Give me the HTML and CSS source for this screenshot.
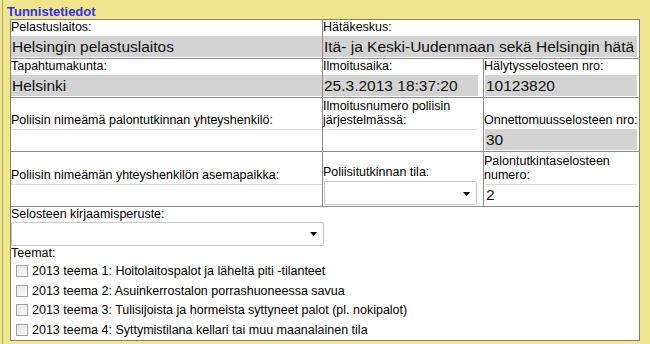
FILE: index.html
```html
<!DOCTYPE html>
<html lang="fi">
<head>
    <meta charset="UTF-8">
    <meta name="viewport" content="width=device-width, initial-scale=1.0">
    <title>Tunnistetiedot</title>
    <link rel="stylesheet" href="styles.css">
</head>
<body>

<div class="panel">
    <div class="panel-title">Tunnistetiedot</div>

    <div class="form-grid">
        <!-- Row 1 -->
        <div class="cell">
            <div class="label">Pelastuslaitos:</div>
            <div class="value">Helsingin pelastuslaitos</div>
        </div>
        <div class="cell wide">
            <div class="label">Hätäkeskus:</div>
            <div class="value w-wide">Itä- ja Keski-Uudenmaan sekä Helsingin hätä</div>
        </div>

        <!-- Row 2 -->
        <div class="cell">
            <div class="label">Tapahtumakunta:</div>
            <div class="value">Helsinki</div>
        </div>
        <div class="cell">
            <div class="label">Ilmoitusaika:</div>
            <div class="value w-mid">25.3.2013 18:37:20</div>
        </div>
        <div class="cell">
            <div class="label">Hälytysselosteen nro:</div>
            <div class="value w-right">10123820</div>
        </div>

        <!-- Row 3 -->
        <div class="cell">
            <div class="label">Poliisin nimeämä palontutkinnan yhteyshenkilö:</div>
            <div class="value blank"></div>
        </div>
        <div class="cell">
            <div class="label">Ilmoitusnumero poliisin<br>järjestelmässä:</div>
            <div class="value blank w-mid-blank"></div>
        </div>
        <div class="cell">
            <div class="label">Onnettomuusselosteen nro:</div>
            <div class="value w-right">30</div>
        </div>

        <!-- Row 4 -->
        <div class="cell">
            <div class="label">Poliisin nimeämän yhteyshenkilön asemapaikka:</div>
            <div class="value blank"></div>
        </div>
        <div class="cell">
            <div class="label">Poliisitutkinnan tila:</div>
            <div class="select select-mid">
                <svg width="7" height="4" viewBox="0 0 7 4"><path d="M0 0H7L3.5 4Z" fill="#000"/></svg>
            </div>
        </div>
        <div class="cell">
            <div class="label">Palontutkintaselosteen<br>numero:</div>
            <div class="value blank w-right">2</div>
        </div>

        <!-- Row 5 -->
        <div class="cell full">
            <div class="label tight">Selosteen kirjaamisperuste:</div>
            <div class="select select-wide">
                <svg width="7" height="4" viewBox="0 0 7 4"><path d="M0 0H7L3.5 4Z" fill="#000"/></svg>
            </div>
            <div class="label tight">Teemat:</div>
            <div class="theme-list">
                <div class="theme"><span class="check"></span>2013 teema 1: Hoitolaitospalot ja läheltä piti -tilanteet</div>
                <div class="theme"><span class="check"></span>2013 teema 2: Asuinkerrostalon porrashuoneessa savua</div>
                <div class="theme"><span class="check"></span>2013 teema 3: Tulisijoista ja hormeista syttyneet palot (pl. nokipalot)</div>
                <div class="theme"><span class="check"></span>2013 teema 4: Syttymistilana kellari tai muu maanalainen tila</div>
            </div>
        </div>
    </div>
</div>

</body>
</html>
```

FILE: styles.css
```css
body {
    margin: 0;
    padding: 0;
    background-color: #f0e68c;
    font-family: Arial, 'Liberation Sans', sans-serif;
    color: #000;
}
.panel {
    margin-left: 2px;
    border-left: 1px solid #a9a37a;
    padding: 4px 0 0 4px;
    height: 340px;
    background-color: #f0e68c;
}
.panel-title {
    font-size: 13px;
    font-weight: bold;
    line-height: 15px;
    color: #2f2ff5;
}
.form-grid {
    display: grid;
    grid-template-columns: 311px 160px 155px;
    grid-template-rows: 38px 38px 53px 54px 133px;
    gap: 1px;
    width: 628px;
    margin-left: 3px;
    border: 1px solid #808080;
    background-color: #8c8c8c;
}
.cell {
    background: #fff;
    display: flex;
    flex-direction: column;
    justify-content: flex-end;
    padding-bottom: 1px;
    min-width: 0;
}
.cell.wide {
    grid-column: span 2;
}
.cell.full {
    grid-column: 1 / -1;
    justify-content: flex-start;
    padding-bottom: 0;
}
.label {
    font-size: 12.5px;
    line-height: 14px;
    padding-bottom: 2px;
    white-space: nowrap;
}
.label.tight {
    padding-bottom: 1px;
}
.value {
    height: 21px;
    line-height: 21px;
    font-size: 15.5px;
    padding-left: 1px;
    background-color: #d3d3d3;
    color: #111;
    white-space: nowrap;
    overflow: hidden;
    box-sizing: border-box;
}
.value.blank {
    background-color: #fff;
    border-top: 1px solid #dcdcdc;
    line-height: 20px;
}
.w-wide {
    width: 314px;
}
.w-mid {
    width: 155px;
}
.w-mid-blank {
    width: 154px;
}
.w-right {
    width: 152px;
    margin-left: 1px;
}
.select {
    height: 24px;
    box-sizing: border-box;
    border: 1px solid #c9c9c9;
    border-radius: 2px;
    background: #fff;
    display: flex;
    align-items: center;
    justify-content: flex-end;
    padding-right: 6px;
}
.select svg {
    display: block;
}
.select-mid {
    width: 153px;
    margin-left: 1px;
    padding-top: 1px;
}
.select-wide {
    width: 313px;
}
.theme-list {
    display: flex;
    flex-direction: column;
}
.theme {
    display: flex;
    align-items: center;
    height: 19.75px;
    padding-left: 5px;
    font-size: 12.5px;
    white-space: nowrap;
}
.check {
    width: 12px;
    height: 12px;
    box-sizing: border-box;
    border: 1px solid #a3a3a3;
    background: linear-gradient(135deg, #e6e6e6, #fafafa);
    margin-right: 4px;
    flex: none;
}
```
